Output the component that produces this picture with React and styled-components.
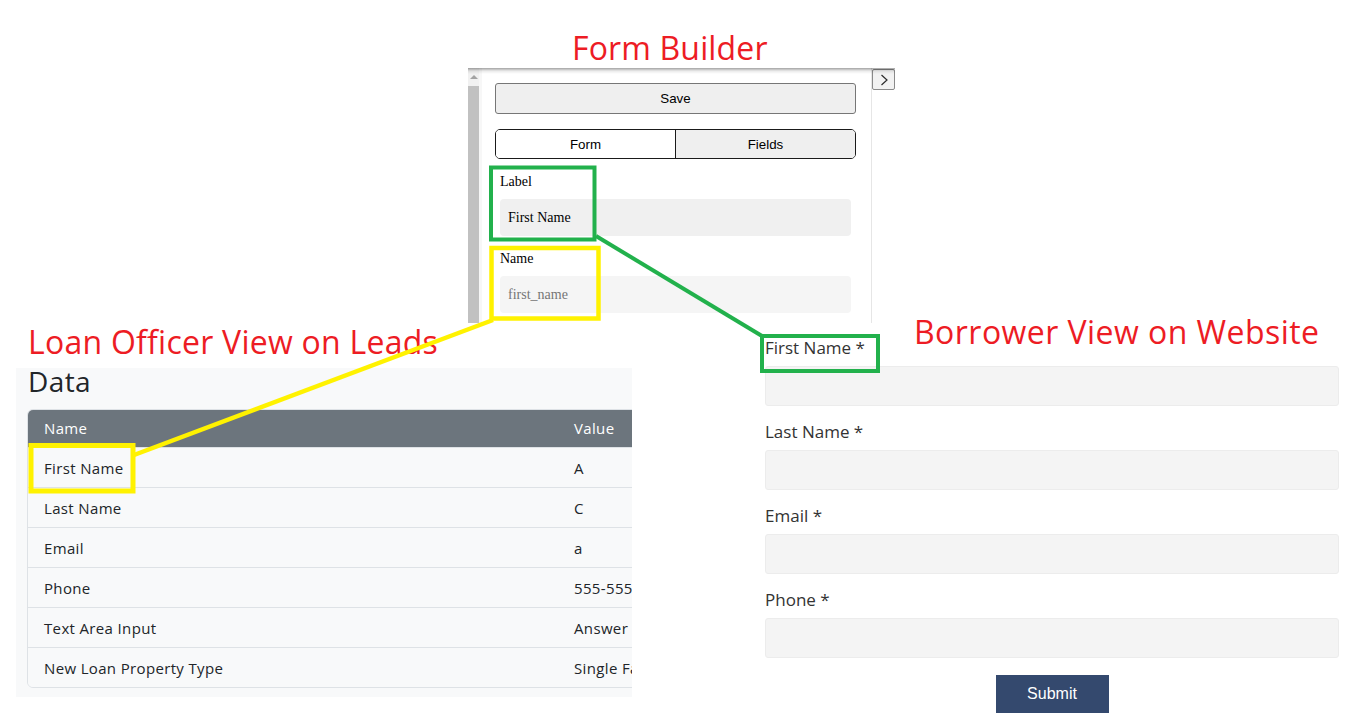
import React from "react";
import styled, { createGlobalStyle } from "styled-components";

const GlobalStyle = createGlobalStyle`
  html, body {
    margin: 0;
    padding: 0;
    background: #ffffff;
  }
  body {
    font-family: "Open Sans", "Liberation Sans", sans-serif;
  }
  * { box-sizing: border-box; }
`;

/* ---------- board ---------- */

const Board = styled.div`
  position: relative;
  width: 1361px;
  height: 725px;
  overflow: hidden;
  background: #ffffff;
`;

const Caption = styled.h2`
  position: absolute;
  left: ${(p) => p.$x}px;
  top: ${(p) => p.$y}px;
  margin: 0;
  font-family: "Open Sans", "Liberation Sans", sans-serif;
  font-weight: 400;
  font-size: 32px;
  line-height: 32px;
  letter-spacing: ${(p) => p.$track || 0.2}px;
  color: #ed1c24;
  white-space: nowrap;
`;

const Snapshot = styled.section`
  position: absolute;
  left: ${(p) => p.$x}px;
  top: ${(p) => p.$y}px;
  width: ${(p) => p.$w}px;
  height: ${(p) => (p.$h ? `${p.$h}px` : "auto")};
  overflow: hidden;
`;

const Callouts = styled.svg`
  position: absolute;
  left: 0;
  top: 0;
  pointer-events: none;
`;

/* ---------- form builder sidebar ---------- */

const Builder = styled(Snapshot)`
  display: flex;
  background: #ffffff;

  &::after {
    content: "";
    position: absolute;
    left: 0;
    right: 0;
    top: 0;
    height: 6px;
    background: linear-gradient(rgba(0, 0, 0, 0.36), rgba(0, 0, 0, 0.08) 50%, rgba(0, 0, 0, 0));
    pointer-events: none;
  }
`;

const ScrollTrack = styled.div`
  flex: none;
  width: 14px;
  display: flex;
  flex-direction: column;
  background: #f1f1f1;
  border-right: 3px solid #f7f7f7;
`;

const ScrollArrow = styled.div`
  height: 18px;
  display: flex;
  align-items: center;
  justify-content: center;

  &::before {
    content: "";
    border-left: 4px solid transparent;
    border-right: 4px solid transparent;
    border-bottom: 4px solid #a3a3a3;
  }
`;

const ScrollThumb = styled.div`
  flex: 1;
  background: #c1c1c1;
`;

const BuilderBody = styled.div`
  flex: none;
  width: 390px;
  padding: 15px 15px 0 13px;
  border-right: 1px solid #e6e6e6;
  display: flex;
  flex-direction: column;
  gap: 15px;
`;

const ToggleColumn = styled.div`
  flex: none;
  width: 23px;
  padding-top: 1px;
`;

const ToggleButton = styled.button`
  width: 23px;
  height: 21px;
  padding: 0;
  border: 1px solid #8a8a8a;
  border-radius: 2px;
  background: #f2f2f2;
  display: flex;
  align-items: center;
  justify-content: center;
`;

const SaveButton = styled.button`
  height: 31px;
  width: 100%;
  border: 1px solid #767676;
  border-radius: 3px;
  background: #efefef;
  font-family: "Liberation Sans", Arial, sans-serif;
  font-size: 13.33px;
  color: #000;
`;

const Tabs = styled.div`
  height: 30px;
  display: flex;
  border: 1px solid #1a1a1a;
  border-radius: 5px;
  overflow: hidden;
`;

const Tab = styled.button`
  flex: 1;
  border: none;
  border-left: ${(p) => (p.$first ? "none" : "1px solid #1a1a1a")};
  background: ${(p) => (p.$shaded ? "#efefef" : "#ffffff")};
  font-family: "Liberation Sans", Arial, sans-serif;
  font-size: 13.33px;
  color: #000;
  padding: 0;
`;

const BuilderField = styled.label`
  display: flex;
  flex-direction: column;
  gap: 9px;
  padding: 0 5px;
`;

const BuilderLabel = styled.span`
  font-family: "Liberation Serif", "Times New Roman", serif;
  font-size: 14px;
  line-height: 16px;
  color: #000;
`;

const BuilderInput = styled.input`
  height: 37px;
  width: 100%;
  border: none;
  outline: none;
  border-radius: 4px;
  background: ${(p) => p.$tone};
  padding: 0 8px;
  font-family: "Liberation Serif", "Times New Roman", serif;
  font-size: 14px;
  color: #000;

  &::placeholder {
    color: #767676;
  }
`;

/* ---------- lead data table ---------- */

const Leads = styled(Snapshot)`
  background: #f8f9fa;
  overflow: visible;
`;

const LeadsHeading = styled.h3`
  margin: -3px 0 12px 12px;
  font-family: "Open Sans", sans-serif;
  font-weight: 400;
  font-size: 28px;
  line-height: 32px;
  letter-spacing: 0.4px;
  color: #212529;
`;

const TableClip = styled.div`
  overflow: hidden;
  padding-left: 11px;
`;

const DataTable = styled.table`
  width: 832px;
  table-layout: fixed;
  border-collapse: separate;
  border-spacing: 0;
  border: 1px solid #dee2e6;
  border-radius: 6px;
  overflow: hidden;
  font-family: "Open Sans", sans-serif;
  font-size: 15px;
  letter-spacing: 0.35px;
`;

const HeadCell = styled.th`
  height: 38px;
  padding: 0 16px 2px;
  text-align: left;
  font-weight: 500;
  color: #ffffff;
  background: #6c757d;
  border-bottom: 1px solid #dee2e6;
`;

const Cell = styled.td`
  height: ${(p) => (p.$last ? 39 : 40)}px;
  padding: 0 16px;
  color: #212529;
  background: #f8f9fa;
  border-bottom: ${(p) => (p.$last ? "none" : "1px solid #dee2e6")};
  white-space: nowrap;
  overflow: hidden;
`;

/* ---------- public web form ---------- */

const WebForm = styled(Snapshot)`
  display: flex;
  flex-direction: column;
  gap: 15px;
`;

const WebField = styled.label`
  display: flex;
  flex-direction: column;
  gap: 7px;
`;

const WebLabel = styled.span`
  font-family: "Open Sans", sans-serif;
  font-size: 17px;
  line-height: 22px;
  color: #333333;
`;

const WebInput = styled.input`
  height: 40px;
  width: 100%;
  border: 1px solid #ececec;
  border-radius: 3px;
  background: #f4f4f4;
  outline: none;
`;

const SubmitButton = styled.button`
  align-self: center;
  margin-top: 2px;
  width: 113px;
  height: 38px;
  border: none;
  background: #34496e;
  color: #ffffff;
  font-family: "Liberation Sans", Arial, sans-serif;
  font-size: 16px;
`;

/* ---------- data ---------- */

const leadRows = [
  ["First Name", "A"],
  ["Last Name", "C"],
  ["Email", "a"],
  ["Phone", "555-555-5555"],
  ["Text Area Input", "Answer"],
  ["New Loan Property Type", "Single Family"],
];

const webFields = ["First Name", "Last Name", "Email", "Phone"];

export default function App() {
  return (
    <Board>
      <GlobalStyle />

      <Caption $x={572} $y={32} $track={0.15}>Form Builder</Caption>
      <Caption $x={28} $y={326} $track={0.25}>Loan Officer View on Leads</Caption>
      <Caption $x={914} $y={316} $track={0.45}>Borrower View on Website</Caption>

      <Builder $x={468} $y={68} $w={427} $h={255}>
        <ScrollTrack>
          <ScrollArrow />
          <ScrollThumb />
        </ScrollTrack>
        <BuilderBody>
          <SaveButton>Save</SaveButton>
          <Tabs>
            <Tab $first>Form</Tab>
            <Tab $shaded>Fields</Tab>
          </Tabs>
          <BuilderField>
            <BuilderLabel>Label</BuilderLabel>
            <BuilderInput $tone="#f0f0f0" value="First Name" readOnly />
          </BuilderField>
          <BuilderField>
            <BuilderLabel>Name</BuilderLabel>
            <BuilderInput $tone="#f5f5f5" placeholder="first_name" readOnly />
          </BuilderField>
        </BuilderBody>
        <ToggleColumn>
          <ToggleButton aria-label="Collapse">
            <svg width="10" height="14" viewBox="0 0 10 14">
              <polyline points="2.5,2 8,7 2.5,12" fill="none" stroke="#2b2b2b" strokeWidth="1.2" />
            </svg>
          </ToggleButton>
        </ToggleColumn>
      </Builder>

      <Leads $x={16} $y={368} $w={616} $h={329}>
        <LeadsHeading>Data</LeadsHeading>
        <TableClip>
          <DataTable>
            <colgroup>
              <col style={{ width: 530 }} />
              <col />
            </colgroup>
            <thead>
              <tr>
                <HeadCell>Name</HeadCell>
                <HeadCell>Value</HeadCell>
              </tr>
            </thead>
            <tbody>
              {leadRows.map(([name, value], i) => {
                const last = i === leadRows.length - 1;
                return (
                  <tr key={name}>
                    <Cell $last={last}>{name}</Cell>
                    <Cell $last={last}>{value}</Cell>
                  </tr>
                );
              })}
            </tbody>
          </DataTable>
        </TableClip>
      </Leads>

      <WebForm $x={765} $y={337} $w={574}>
        {webFields.map((f) => (
          <WebField key={f}>
            <WebLabel>{f} *</WebLabel>
            <WebInput type="text" />
          </WebField>
        ))}
        <SubmitButton>Submit</SubmitButton>
      </WebForm>

      <Callouts width="1361" height="725" viewBox="0 0 1361 725">
        <g fill="none">
          <rect x="491" y="167.5" width="103.5" height="72" stroke="#22b14c" strokeWidth="4" />
          <line x1="596" y1="236" x2="762" y2="336" stroke="#22b14c" strokeWidth="4" />
          <rect x="762" y="336" width="116" height="35" stroke="#22b14c" strokeWidth="4" />
          <rect x="491.5" y="248" width="107" height="70.5" stroke="#fff200" strokeWidth="4.5" />
          <line x1="493" y1="320" x2="134" y2="455" stroke="#fff200" strokeWidth="4.5" />
          <rect x="31" y="445.5" width="102" height="45.5" stroke="#fff200" strokeWidth="5" />
        </g>
      </Callouts>
    </Board>
  );
}
